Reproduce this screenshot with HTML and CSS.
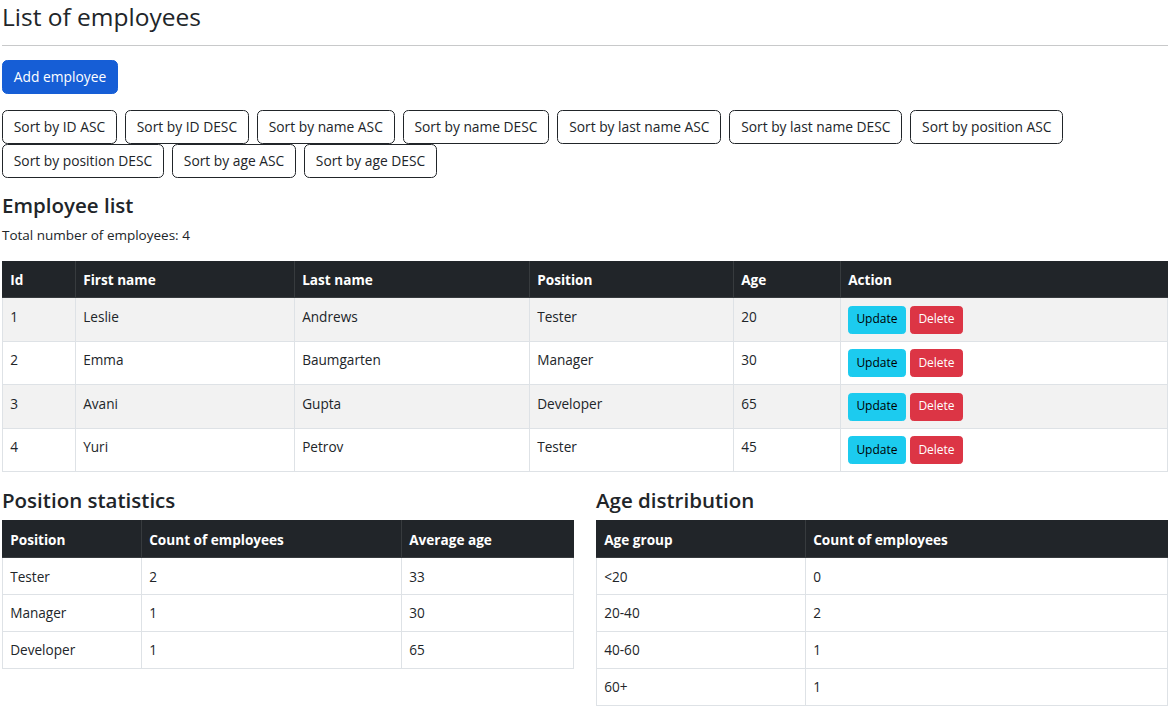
FILE: index.html
```html
<!DOCTYPE html>
<html lang="en">
<head>
<meta charset="utf-8">
<title>List of employees</title>
<link rel="stylesheet" href="styles.css">
</head>
<body>
<div class="container">
  <h2 class="page-title">List of employees</h2>
  <hr class="divider">
  <div class="add-row">
    <button class="btn btn-primary">Add employee</button>
  </div>
  <div class="sort-bar">
    <button class="btn btn-outline">Sort by ID ASC</button>
    <button class="btn btn-outline">Sort by ID DESC</button>
    <button class="btn btn-outline">Sort by name ASC</button>
    <button class="btn btn-outline">Sort by name DESC</button>
    <button class="btn btn-outline">Sort by last name ASC</button>
    <button class="btn btn-outline">Sort by last name DESC</button>
    <button class="btn btn-outline">Sort by position ASC</button>
    <button class="btn btn-outline">Sort by position DESC</button>
    <button class="btn btn-outline">Sort by age ASC</button>
    <button class="btn btn-outline">Sort by age DESC</button>
  </div>

  <h4 class="section-title">Employee list</h4>
  <p class="total">Total number of employees: 4</p>

  <table class="table table-striped">
    <colgroup>
      <col class="c-id"><col class="c-first"><col class="c-last"><col class="c-pos"><col class="c-age"><col class="c-act">
    </colgroup>
    <thead>
      <tr><th>Id</th><th>First name</th><th>Last name</th><th>Position</th><th>Age</th><th>Action</th></tr>
    </thead>
    <tbody>
      <tr><td>1</td><td>Leslie</td><td>Andrews</td><td>Tester</td><td>20</td>
        <td><button class="btn-sm btn-info">Update</button><button class="btn-sm btn-danger">Delete</button></td></tr>
      <tr><td>2</td><td>Emma</td><td>Baumgarten</td><td>Manager</td><td>30</td>
        <td><button class="btn-sm btn-info">Update</button><button class="btn-sm btn-danger">Delete</button></td></tr>
      <tr><td>3</td><td>Avani</td><td>Gupta</td><td>Developer</td><td>65</td>
        <td><button class="btn-sm btn-info">Update</button><button class="btn-sm btn-danger">Delete</button></td></tr>
      <tr><td>4</td><td>Yuri</td><td>Petrov</td><td>Tester</td><td>45</td>
        <td><button class="btn-sm btn-info">Update</button><button class="btn-sm btn-danger">Delete</button></td></tr>
    </tbody>
  </table>

  <div class="stats-row">
    <div class="stats-col">
      <h4 class="section-title">Position statistics</h4>
      <table class="table stats">
        <colgroup><col class="s-pos"><col class="s-count"><col class="s-avg"></colgroup>
        <thead><tr><th>Position</th><th>Count of employees</th><th>Average age</th></tr></thead>
        <tbody>
          <tr><td>Tester</td><td>2</td><td>33</td></tr>
          <tr><td>Manager</td><td>1</td><td>30</td></tr>
          <tr><td>Developer</td><td>1</td><td>65</td></tr>
        </tbody>
      </table>
    </div>
    <div class="stats-col">
      <h4 class="section-title">Age distribution</h4>
      <table class="table stats">
        <colgroup><col class="a-group"><col class="a-count"></colgroup>
        <thead><tr><th>Age group</th><th>Count of employees</th></tr></thead>
        <tbody>
          <tr><td>&lt;20</td><td>0</td></tr>
          <tr><td>20-40</td><td>2</td></tr>
          <tr><td>40-60</td><td>1</td></tr>
          <tr><td>60+</td><td>1</td></tr>
        </tbody>
      </table>
    </div>
  </div>
</div>
</body>
</html>
```
FILE: styles.css
```css
* { box-sizing: border-box; }

body {
  margin: 0;
  font-family: "Open Sans", "Noto Sans", "Liberation Sans", sans-serif;
  font-size: 13.6px;
  line-height: 1.5;
  color: #212529;
  background: #fff;
}

.container {
  padding: 0 3px 0 2px;
}

.page-title {
  margin: 0 0 7px;
  font-size: 24.5px;
  font-weight: 500;
  line-height: 34px;
}

.divider {
  margin: 11px 0 14px;
  border: 0;
  border-top: 1px solid #c8c9ca;
  height: 0;
}

.add-row {
  margin-bottom: 16px;
}

.btn {
  font-family: inherit;
  font-size: 13.8px;
  line-height: 21.6px;
  padding: 5.2px 10.8px;
  border-radius: 5.4px;
  border: 1px solid transparent;
  background: transparent;
  color: #212529;
  cursor: pointer;
}

.btn-primary {
  background: #165ed6;
  border-color: #165ed6;
  color: #fff;
}

.btn-outline {
  border-color: #212529;
  color: #212529;
  background: #fff;
}

.sort-bar {
  display: flex;
  flex-wrap: wrap;
  column-gap: 8px;
  row-gap: 0;
  margin-bottom: 14px;
}

.section-title {
  margin: 0 0 7px;
  font-size: 20.5px;
  font-weight: 600;
  line-height: 26px;
}

.total {
  margin: 0 0 14px;
  font-size: 13.5px;
  line-height: 21.6px;
}

.table {
  width: 100%;
  border-collapse: collapse;
  margin-bottom: 15px;
  table-layout: fixed;
}

.table th,
.table td {
  text-align: left;
  vertical-align: top;
  padding: 7.2px 7.2px;
  border: 1px solid #dee2e6;
  line-height: 21.6px;
}

.table thead th {
  background: #212529;
  color: #fff;
  font-weight: 700;
  border-color: #373b3e;
  border-top-color: #212529;
}

.table thead th:first-child { border-left-color: #212529; }
.table thead th:last-child { border-right-color: #212529; }

.table-striped tbody tr:nth-child(odd) td {
  background: #f2f2f2;
}

.c-id { width: 73px; }
.c-first { width: 219px; }
.c-last { width: 235px; }
.c-pos { width: 204px; }
.c-age { width: 107px; }

.btn-sm {
  font-family: inherit;
  font-size: 12px;
  line-height: 18.9px;
  padding: 3.6px 7.2px;
  border-radius: 3.6px;
  border: 1px solid transparent;
  margin-right: 4.5px;
  cursor: pointer;
}

.btn-info {
  background: #1ccbef;
  border-color: #1ccbef;
  color: #000;
}

.btn-danger {
  background: #dc3545;
  border-color: #dc3545;
  color: #fff;
}

.stats-row {
  display: flex;
  column-gap: 22px;
}

.stats-col {
  flex: 1 1 0;
  min-width: 0;
}

.s-pos { width: 139px; }
.s-count { width: 260px; }
.a-group { width: 209px; }
```
